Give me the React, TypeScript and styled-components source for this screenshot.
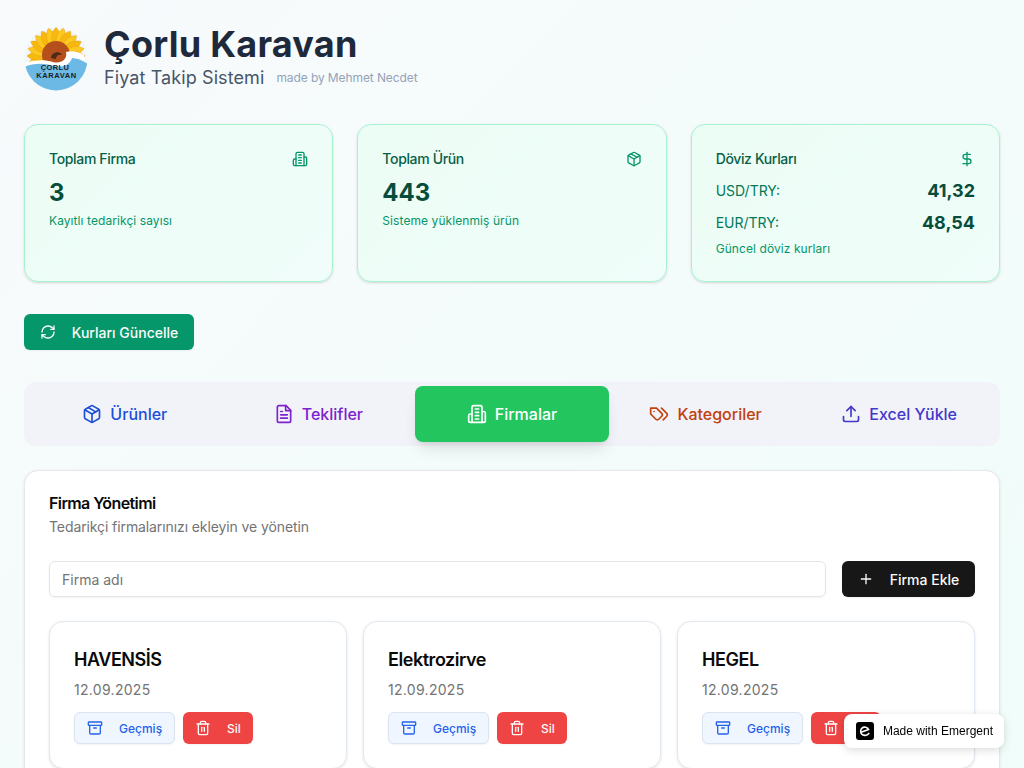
import React from 'react';
import styled, { createGlobalStyle } from 'styled-components';
import { Archive, DollarSign, Package, Plus, RefreshCw, Trash2 } from 'lucide-react';

const GlobalStyle = createGlobalStyle`
  html, body {
    margin: 0;
    padding: 0;
  }
  body {
    font-family: Inter, "Liberation Sans", sans-serif;
    color: #0a0a0a;
  }
  * {
    box-sizing: border-box;
  }
`;

const Page = styled.div`
  min-height: 100vh;
  padding: 24px;
  background: linear-gradient(135deg, #f8fafc 0%, #f0fdfa 100%);
`;

const Header = styled.header`
  display: flex;
  align-items: center;
  gap: 16px;
  margin-bottom: 32px;
  height: 68px;
`;

const Logo = styled.svg`
  width: 64px;
  height: 64px;
  flex-shrink: 0;
  margin-top: 2px;
`;

const Title = styled.h1`
  margin: 0;
  font-size: 36px;
  line-height: 40px;
  font-weight: 700;
  letter-spacing: 0.25px;
  color: #1e293b;
`;

const SubRow = styled.div`
  display: flex;
  align-items: center;
  gap: 12px;
`;

const Subtitle = styled.span`
  font-size: 18px;
  line-height: 28px;
  letter-spacing: 0.1px;
  color: #475569;
`;

const MadeBy = styled.span`
  font-size: 12px;
  line-height: 16px;
  letter-spacing: -0.1px;
  color: #94a3b8;
`;

const StatGrid = styled.div`
  display: grid;
  grid-template-columns: repeat(3, 1fr);
  gap: 24px;
  margin-bottom: 32px;
`;

const StatCard = styled.div`
  height: 158px;
  padding: 24px;
  border: 1px solid #a7f3d0;
  border-radius: 14px;
  background: linear-gradient(135deg, #ecfdf5, #f0fdfa);
  box-shadow: 0 1px 3px rgba(0, 0, 0, 0.1), 0 1px 2px rgba(0, 0, 0, 0.06);
`;

const StatHead = styled.div`
  display: flex;
  align-items: center;
  justify-content: space-between;
  height: 20px;
  margin-bottom: 8px;
  color: #059669;
`;

const StatTitle = styled.span`
  font-size: 14px;
  line-height: 20px;
  font-weight: 500;
  letter-spacing: -0.025em;
  color: #065f46;
`;

const StatValue = styled.div`
  font-size: 24px;
  line-height: 32px;
  font-weight: 700;
  color: #064e3b;
`;

const StatNote = styled.p`
  margin: 4px 0 0;
  font-size: 12px;
  line-height: 16px;
  letter-spacing: 0.08px;
  color: #059669;
`;

const RateList = styled.div`
  display: flex;
  flex-direction: column;
  gap: 4px;
`;

const RateRow = styled.div`
  display: flex;
  align-items: center;
  justify-content: space-between;
  height: 28px;
`;

const RateLabel = styled.span`
  font-size: 14px;
  line-height: 20px;
  color: #047857;
`;

const RateValue = styled.span`
  font-size: 18px;
  line-height: 28px;
  font-weight: 700;
  color: #064e3b;
`;

const Button = styled.button<{ $bg: string; $color?: string; $hasBorder?: boolean }>`
  display: inline-flex;
  align-items: center;
  justify-content: center;
  font-family: inherit;
  font-weight: 500;
  cursor: pointer;
  white-space: nowrap;
  background: ${(p) => p.$bg};
  color: ${(p) => p.$color || '#fafafa'};
  border: ${(p) => (p.$hasBorder ? '1px solid #dbe3ef' : 'none')};
  border-radius: 6px;
  box-shadow: 0 1px 2px rgba(0, 0, 0, 0.05);
`;

const RefreshButton = styled(Button)`
  height: 36px;
  width: 170px;
  font-size: 14px;
  gap: 16px;
`;

const TabBar = styled.nav`
  display: grid;
  grid-template-columns: repeat(5, 1fr);
  height: 64px;
  margin-top: 32px;
  margin-bottom: 24px;
  padding: 4px;
  border-radius: 12px;
  background: #f1f3f9;
`;

const Tab = styled.div<{ $color: string; $active?: boolean }>`
  display: flex;
  align-items: center;
  justify-content: center;
  gap: 8px;
  font-size: 16px;
  font-weight: 500;
  border-radius: 8px;
  color: ${(p) => (p.$active ? '#ffffff' : p.$color)};
  background: ${(p) => (p.$active ? '#22c55e' : 'transparent')};
  box-shadow: ${(p) =>
    p.$active ? '0 10px 15px -3px rgba(0,0,0,0.1), 0 4px 6px -4px rgba(0,0,0,0.1)' : 'none'};
`;

const TabIcon = styled.svg`
  width: 20px;
  height: 20px;
  fill: none;
  stroke: currentColor;
  stroke-width: 2;
  stroke-linecap: round;
  stroke-linejoin: round;
  flex-shrink: 0;
`;

const StatIcon = styled(TabIcon)`
  width: 16px;
  height: 16px;
`;

const Panel = styled.section`
  padding: 24px;
  border: 1px solid #e5e7eb;
  border-radius: 14px;
  background: #ffffff;
  box-shadow: 0 1px 3px rgba(0, 0, 0, 0.1);
`;

const PanelTitle = styled.h2`
  margin: 0;
  font-size: 16px;
  line-height: 16px;
  font-weight: 600;
  letter-spacing: -0.6px;
  color: #0a0a0a;
`;

const PanelDesc = styled.p`
  margin: 6px 0 0;
  font-size: 14px;
  line-height: 20px;
  letter-spacing: -0.1px;
  color: #737373;
`;

const AddRow = styled.div`
  display: flex;
  gap: 16px;
  margin-top: 24px;
  margin-bottom: 24px;
`;

const NameInput = styled.input`
  flex: 1;
  height: 36px;
  padding: 4px 12px;
  font-family: inherit;
  font-size: 14px;
  color: #0a0a0a;
  border: 1px solid #e5e5e5;
  border-radius: 6px;
  background: transparent;
  box-shadow: 0 1px 2px rgba(0, 0, 0, 0.05);

  &::placeholder {
    color: #737373;
  }
`;

const AddButton = styled(Button)`
  height: 36px;
  width: 133px;
  font-size: 14px;
  gap: 16px;
`;

const FirmGrid = styled.div`
  display: grid;
  grid-template-columns: repeat(3, 1fr);
  gap: 16px;
`;

const FirmCard = styled.div`
  padding: 24px;
  border: 1px solid #e2e8f0;
  border-radius: 14px;
  background: #ffffff;
  box-shadow: 0 1px 3px rgba(0, 0, 0, 0.1);
`;

const FirmName = styled.h3`
  margin: 0;
  font-size: 18px;
  line-height: 28px;
  font-weight: 600;
  letter-spacing: -0.025em;
  color: #0a0a0a;
`;

const FirmDate = styled.p`
  margin: 6px 0 0;
  font-size: 14px;
  line-height: 20px;
  letter-spacing: 0.3px;
  color: #737373;
`;

const FirmActions = styled.div`
  display: flex;
  gap: 8px;
  margin-top: 12px;
`;

const SmallButton = styled(Button)`
  height: 32px;
  font-size: 12px;
  gap: 16px;
  padding: 0 12px;
`;

const Badge = styled.a`
  position: fixed;
  right: 20px;
  bottom: 20px;
  display: flex;
  align-items: center;
  gap: 9px;
  height: 34px;
  padding: 0 11px 0 12px;
  border-radius: 8px;
  background: #ffffff;
  color: #000000;
  font-family: "Liberation Sans", Arial, sans-serif;
  font-size: 12px;
  box-shadow: 0 2px 8px rgba(0, 0, 0, 0.15);
`;

const BadgeIcon = styled.svg`
  width: 18px;
  height: 18px;
`;

const firms = ['HAVENSİS', 'Elektrozirve', 'HEGEL'];

function BuildingGlyph() {
  return (
    <>
      <path d="M6 22V4a2 2 0 0 1 2-2h8a2 2 0 0 1 2 2v18Z" />
      <path d="M6 12H4a2 2 0 0 0-2 2v6a2 2 0 0 0 2 2h2" />
      <path d="M18 9h2a2 2 0 0 1 2 2v9a2 2 0 0 1-2 2h-2" />
      <path d="M10 6h4" />
      <path d="M10 10h4" />
      <path d="M10 14h4" />
      <path d="M10 18h4" />
    </>
  );
}

function SunLogo() {
  const petals = Array.from({ length: 15 }, (_, i) => -105 + i * 15);
  return (
    <Logo viewBox="0 0 64 64">
      <defs>
        <clipPath id="logo-clip">
          <circle cx="32" cy="32" r="31.5" />
        </clipPath>
      </defs>
      <circle cx="32" cy="32" r="32" fill="#f4f7f8" />
      <g clipPath="url(#logo-clip)">
        {petals.map((a) => (
          <path
            key={a}
            d="M32 0 C38 7 38 14 32 22 C26 14 26 7 32 0Z"
            fill={a % 30 === 0 ? '#f7b90f' : '#fbc921'}
            stroke="#e89a10"
            strokeWidth="0.4"
            transform={`rotate(${a} 32 29)`}
          />
        ))}
        <circle cx="32" cy="28" r="14" fill="#b5501c" />
        <path d="M27 31 C27 25 36 23 38 28 C34 27 32 29 32 32Z" fill="#4a2a18" />
        <path d="M0 36 C10 33 20 32 29 35 C36 37 44 33 42 25 C48 23 55 25 60 28 L64 64 L0 64Z" fill="#ffffff" />
        <path d="M0 40 C10 36 20 36 30 39 C38 41 46 38 48 31 C53 31 58 33 64 37 L64 64 L0 64Z" fill="#6bb9e4" />
      </g>
      <text x="31" y="43" textAnchor="middle" fontFamily="Liberation Sans, sans-serif" fontSize="7.5" fontWeight="700" letterSpacing="0.4" fill="#1d1d1b">
        ÇORLU
      </text>
      <text x="32.5" y="51" textAnchor="middle" fontFamily="Liberation Sans, sans-serif" fontSize="7.5" fontWeight="700" letterSpacing="0.6" fill="#1d1d1b">
        KARAVAN
      </text>
    </Logo>
  );
}

function App() {
  return (
    <Page>
      <GlobalStyle />
      <Header>
        <SunLogo />
        <div>
          <Title>Çorlu Karavan</Title>
          <SubRow>
            <Subtitle>Fiyat Takip Sistemi</Subtitle>
            <MadeBy>made by Mehmet Necdet</MadeBy>
          </SubRow>
        </div>
      </Header>

      <StatGrid>
        <StatCard>
          <StatHead>
            <StatTitle>Toplam Firma</StatTitle>
            <StatIcon viewBox="0 0 24 24">
              <BuildingGlyph />
            </StatIcon>
          </StatHead>
          <StatValue>3</StatValue>
          <StatNote>Kayıtlı tedarikçi sayısı</StatNote>
        </StatCard>
        <StatCard>
          <StatHead>
            <StatTitle>Toplam Ürün</StatTitle>
            <Package size={16} />
          </StatHead>
          <StatValue>443</StatValue>
          <StatNote>Sisteme yüklenmiş ürün</StatNote>
        </StatCard>
        <StatCard>
          <StatHead>
            <StatTitle>Döviz Kurları</StatTitle>
            <DollarSign size={16} />
          </StatHead>
          <RateList>
            <RateRow>
              <RateLabel>USD/TRY:</RateLabel>
              <RateValue>41,32</RateValue>
            </RateRow>
            <RateRow>
              <RateLabel>EUR/TRY:</RateLabel>
              <RateValue>48,54</RateValue>
            </RateRow>
          </RateList>
          <StatNote>Güncel döviz kurları</StatNote>
        </StatCard>
      </StatGrid>

      <RefreshButton $bg="#059669">
        <RefreshCw size={16} />
        Kurları Güncelle
      </RefreshButton>

      <TabBar>
        <Tab $color="#1d4ed8">
          <Package size={20} />
          Ürünler
        </Tab>
        <Tab $color="#7e22ce">
          <TabIcon viewBox="0 0 24 24">
            <path d="M14.5 2H6a2 2 0 0 0-2 2v16a2 2 0 0 0 2 2h12a2 2 0 0 0 2-2V7.5L14.5 2z" />
            <path d="M14 2v6h6" />
            <path d="M16 13H8" />
            <path d="M16 17H8" />
            <path d="M10 9H8" />
          </TabIcon>
          Teklifler
        </Tab>
        <Tab $color="#15803d" $active>
          <TabIcon viewBox="0 0 24 24">
            <BuildingGlyph />
          </TabIcon>
          Firmalar
        </Tab>
        <Tab $color="#c2410c">
          <TabIcon viewBox="0 0 24 24">
            <path d="M9 5H2v7l6.29 6.29c.94.94 2.48.94 3.42 0l3.58-3.58c.94-.94.94-2.48 0-3.42L9 5Z" />
            <path d="M6 9.01V9" />
            <path d="m15 5 6.3 6.3a2.4 2.4 0 0 1 0 3.4L17 19" />
          </TabIcon>
          Kategoriler
        </Tab>
        <Tab $color="#4338ca">
          <TabIcon viewBox="0 0 24 24">
            <path d="M21 15v4a2 2 0 0 1-2 2H5a2 2 0 0 1-2-2v-4" />
            <path d="M17 8l-5-5-5 5" />
            <path d="M12 3v12" />
          </TabIcon>
          Excel Yükle
        </Tab>
      </TabBar>

      <Panel>
        <PanelTitle>Firma Yönetimi</PanelTitle>
        <PanelDesc>Tedarikçi firmalarınızı ekleyin ve yönetin</PanelDesc>
        <AddRow>
          <NameInput placeholder="Firma adı" />
          <AddButton $bg="#171717">
            <Plus size={16} />
            Firma Ekle
          </AddButton>
        </AddRow>
        <FirmGrid>
          {firms.map((name) => (
            <FirmCard key={name}>
              <FirmName>{name}</FirmName>
              <FirmDate>12.09.2025</FirmDate>
              <FirmActions>
                <SmallButton $bg="#eff6ff" $color="#2563eb" $hasBorder>
                  <Archive size={16} />
                  Geçmiş
                </SmallButton>
                <SmallButton $bg="#ef4444">
                  <Trash2 size={16} />
                  Sil
                </SmallButton>
              </FirmActions>
            </FirmCard>
          ))}
        </FirmGrid>
      </Panel>

      <Badge>
        <BadgeIcon viewBox="0 0 18 18">
          <rect width="18" height="18" rx="3" fill="#000000" />
          <path
            d="M5 10.2 12.6 7.6C11.6 5 8 4.4 6 6.2 4.4 7.6 4.2 10.4 5.6 12 7.4 14 11 13.8 12.8 11.4"
            fill="none"
            stroke="#ffffff"
            strokeWidth="1.6"
            strokeLinecap="round"
          />
        </BadgeIcon>
        Made with Emergent
      </Badge>
    </Page>
  );
}

export default App;
